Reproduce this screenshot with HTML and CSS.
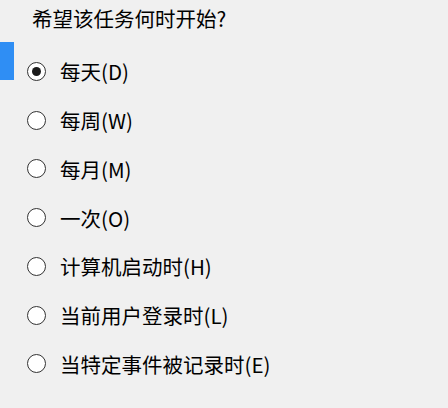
FILE: index.html
```html
<!DOCTYPE html>
<html lang="zh-CN">
<head>
  <meta charset="UTF-8" />
  <title>触发器</title>
  <link rel="stylesheet" href="styles.css">
</head>
<body>
<div class="page">
  <div class="side">
    <div class="side-marker"></div>
  </div>
  <div class="content">
    <div class="question">希望该任务何时开始?</div>
    <div class="options">
      <label class="option"><span class="radio checked"></span><span class="option-text">每天(D)</span></label>
      <label class="option"><span class="radio"></span><span class="option-text">每周(W)</span></label>
      <label class="option"><span class="radio"></span><span class="option-text">每月(M)</span></label>
      <label class="option"><span class="radio"></span><span class="option-text">一次(O)</span></label>
      <label class="option"><span class="radio"></span><span class="option-text">计算机启动时(H)</span></label>
      <label class="option"><span class="radio"></span><span class="option-text">当前用户登录时(L)</span></label>
      <label class="option"><span class="radio"></span><span class="option-text">当特定事件被记录时(E)</span></label>
    </div>
  </div>
</div>
</body>
</html>
```

FILE: styles.css
```css
html, body {
  margin: 0;
  height: 100%;
}
body {
  background-color: #f0f0f0;
  color: #000;
  font-family: "Noto Sans CJK SC", "Noto Sans", sans-serif;
  font-size: 20.5px;
}
.page {
  display: flex;
  height: 100%;
}
.side {
  width: 14px;
  flex: none;
}
.side-marker {
  margin-top: 42px;
  height: 38px;
  background: #2f8ef4;
}
.content {
  flex: 1;
}
.question {
  padding: 4px 0 0 18px;
  line-height: 29px;
  height: 29px;
}
.options {
  margin-top: 14px;
  padding-left: 13px;
  display: flex;
  flex-direction: column;
}
.option {
  display: flex;
  align-items: center;
  height: 48.75px;
  line-height: 28px;
}
.radio {
  width: 17px;
  height: 17px;
  border: 1.5px solid #333;
  border-radius: 50%;
  background: #fff;
  flex: none;
  display: flex;
  align-items: center;
  justify-content: center;
}
.radio.checked::after {
  content: "";
  width: 9px;
  height: 9px;
  border-radius: 50%;
  background: #1a1a1a;
}
.option-text {
  margin-left: 14px;
}
```
